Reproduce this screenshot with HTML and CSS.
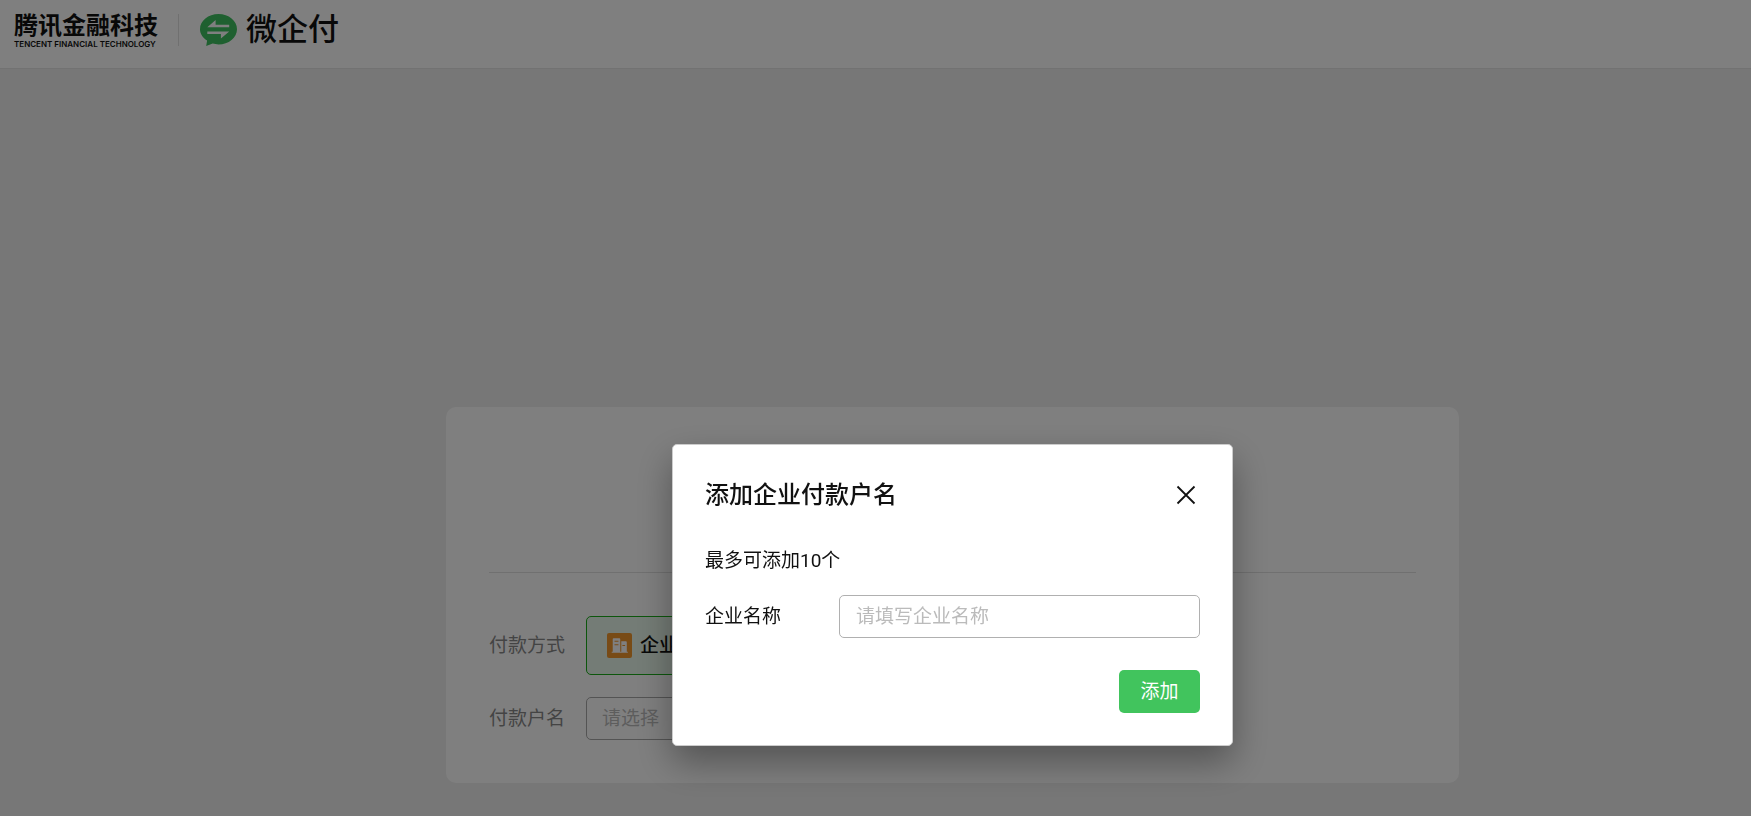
FILE: index.html
```html
<!DOCTYPE html>
<html lang="zh-CN">
<head>
    <meta charset="UTF-8">
    <meta name="viewport" content="width=device-width, initial-scale=1.0">
    <title>微企付</title>
    <link rel="stylesheet" href="styles.css">
</head>
<body>

<header class="header">
    <div class="brand">
        <span class="brand-name">腾讯金融科技</span>
        <span class="brand-en">TENCENT FINANCIAL TECHNOLOGY</span>
    </div>
    <span class="header-line"></span>
    <div class="product">
        <svg class="product-logo" viewBox="0 0 37 32" aria-hidden="true">
            <path fill="#3fc060" d="M18.500 0C28.700 0 37 6.700 37 15.200S28.700 30.400 18.500 30.400c-2 0-4-.3-5.800-.8L6.200 32l.9-5.500C2.700 23.700 0 19.700 0 15.200 0 6.700 8.300 0 18.500 0z"/>
            <path fill="#fff" d="M7.300 13.200l8.300-7.200v4.700h13.600v2.500zM29.200 17.400l-8.300 7.200v-4.700H7.300v-2.500z"/>
        </svg>
        <span class="product-name">微企付</span>
    </div>
</header>

<main class="main">
    <section class="panel">
        <div class="panel-top"></div>
        <div class="panel-form">
            <div class="row">
                <span class="row-label">付款方式</span>
                <button type="button" class="method">
                    <svg class="method-icon" viewBox="0 0 24 24" aria-hidden="true">
                        <rect width="24" height="24" rx="2" fill="#f0962c"/>
                        <path fill="#fff" fill-rule="evenodd" d="M5.500 5.800q0-.8.8-.8h5.600q.8 0 .8.8V18h1V8h4.500q.8 0 .8.800V18h1v1H4.500v-1h1zM7.200 7.500v1h3.800v-1zM7.200 10.800v1h3.800v-1zM14.800 11.500v1h2.600v-1z"/>
                    </svg>
                    <span>企业支付</span>
                </button>
            </div>
            <div class="row">
                <label class="row-label" for="account">付款户名</label>
                <select class="account" id="account">
                    <option>请选择</option>
                </select>
            </div>
        </div>
    </section>
</main>

<div class="mask">
    <form class="dialog" role="dialog" aria-labelledby="dialog-title">
        <div class="dialog-head">
            <h2 class="dialog-title" id="dialog-title">添加企业付款户名</h2>
            <button type="button" class="close" aria-label="关闭">
                <svg viewBox="0 0 20 20" width="20" height="20" aria-hidden="true">
                    <path d="M1.500 1.500l17 17M18.500 1.500l-17 17" stroke="#111" stroke-width="1.800" fill="none"/>
                </svg>
            </button>
        </div>
        <p class="tip">最多可添加10个</p>
        <div class="field">
            <label class="field-label" for="company">企业名称</label>
            <input class="field-input" id="company" type="text" placeholder="请填写企业名称">
        </div>
        <div class="dialog-foot">
            <button type="button" class="submit">添加</button>
        </div>
    </form>
</div>

</body>
</html>
```

FILE: styles.css
```css
* {
    box-sizing: border-box;
}
body {
    margin: 0;
    min-height: 100vh;
    background-color: #eeeeee;
    color: #111;
    font-family: Roboto, "Noto Sans CJK SC", sans-serif;
    font-size: 19px;
    line-height: 28px;
}
button, input, select {
    font: inherit;
    margin: 0;
}

/* Header */
.header {
    display: flex;
    align-items: center;
    height: 69px;
    padding: 0 14px 8px;
    background-color: #fff;
    border-bottom: 1px solid #e4e4e4;
}
.brand {
    display: flex;
    flex-direction: column;
    width: 144px;
}
.brand-name {
    font-size: 24px;
    line-height: 28px;
    font-weight: 700;
    white-space: nowrap;
}
.brand-en {
    font-family: Inter, sans-serif;
    font-size: 8px;
    line-height: 8px;
    font-weight: 600;
    white-space: nowrap;
}
.header-line {
    width: 1px;
    height: 32px;
    margin: 0 21px 0 20px;
    background-color: #e0e0e0;
}
.product {
    display: flex;
    align-items: center;
    gap: 9px;
}
.product-logo {
    width: 37px;
    height: 32px;
}
.product-name {
    font-size: 31px;
    line-height: 34px;
    font-weight: 500;
}

/* Payment panel */
.main {
    display: flex;
    justify-content: center;
    padding: 338px 0 33px 154px;
}
.panel {
    width: 1013px;
    padding: 0 43px;
    background-color: #fff;
    border-radius: 10px;
}
.panel-top {
    height: 166px;
    border-bottom: 1px solid #e0e0e0;
}
.panel-form {
    display: flex;
    flex-direction: column;
    gap: 22px;
    padding: 43px 0;
}
.row {
    display: flex;
    align-items: center;
}
.row-label {
    width: 97px;
    color: #888;
}
.method {
    display: flex;
    align-items: center;
    gap: 8px;
    width: 240px;
    height: 59px;
    padding: 0 20px;
    border: 1px solid #1aad19;
    border-radius: 5px;
    background-color: #e9f8ec;
    color: #111;
    font-weight: 500;
}
.method-icon {
    width: 25px;
    height: 25px;
}
.account {
    width: 500px;
    height: 43px;
    padding: 0 15px;
    border: 1px solid #a8a8a8;
    border-radius: 5px;
    background-color: #fff;
    color: #bbb;
    appearance: none;
}

/* Dialog */
.mask {
    position: fixed;
    top: 0;
    left: 0;
    right: 0;
    bottom: 0;
    display: flex;
    justify-content: center;
    align-items: flex-start;
    padding: 444px 0 0 154px;
    background-color: rgba(0, 0, 0, 0.5);
}
.dialog {
    width: 561px;
    padding: 32px;
    border: 1px solid #ccc;
    border-radius: 5px;
    background-color: #fff;
    box-shadow: 0 16px 36px rgba(0, 0, 0, 0.35);
}
.dialog-head {
    display: flex;
    justify-content: space-between;
    align-items: center;
    height: 36px;
}
.dialog-title {
    margin: 0;
    font-size: 24px;
    line-height: 36px;
    font-weight: 500;
}
.close {
    display: flex;
    padding: 5px 4px;
    border: none;
    background: none;
    cursor: pointer;
}
.tip {
    margin: 34px 0 20px;
}
.field {
    display: flex;
    align-items: center;
}
.field-label {
    width: 134px;
}
.field-input {
    flex: 1;
    min-width: 0;
    height: 43px;
    padding: 0 16px;
    border: 1px solid #b0b0b0;
    border-radius: 5px;
    background-color: #fff;
    color: #111;
}
.field-input::placeholder {
    color: #bbb;
}
.dialog-foot {
    display: flex;
    justify-content: flex-end;
    margin-top: 32px;
}
.submit {
    width: 81px;
    height: 43px;
    padding: 0;
    border: none;
    border-radius: 5px;
    background-color: #41c45d;
    color: #fff;
    cursor: pointer;
}
```
